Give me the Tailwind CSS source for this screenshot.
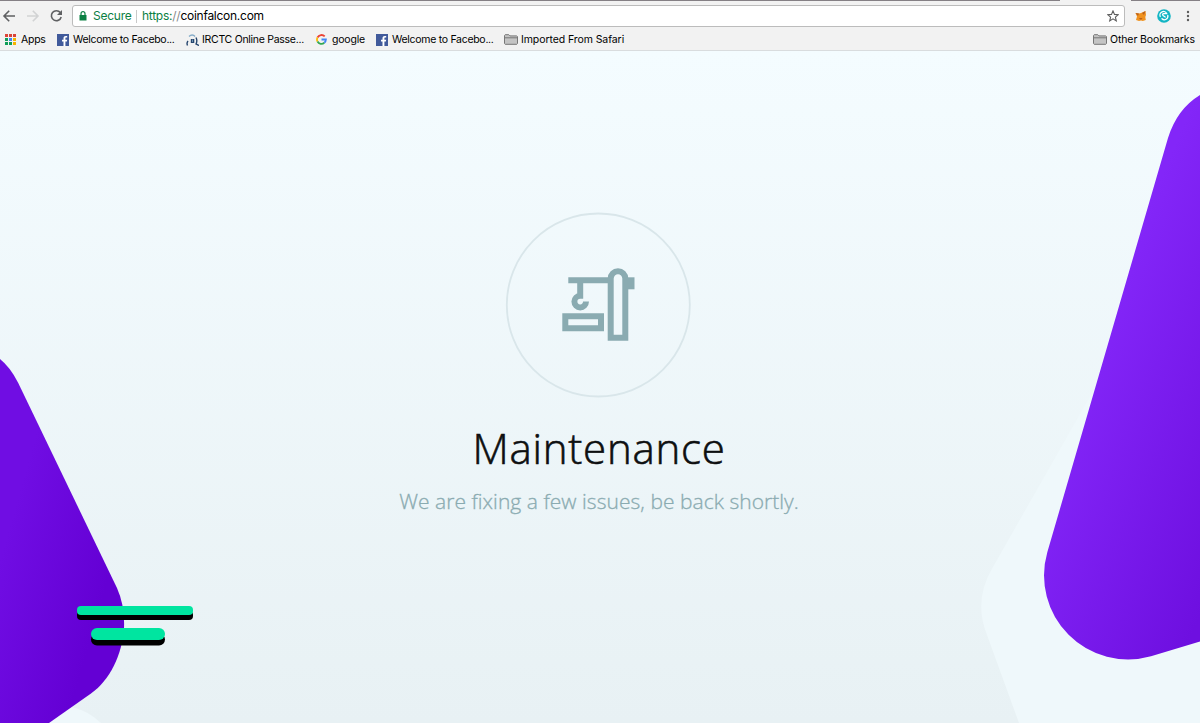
<!DOCTYPE html>
<html lang="en">
<head>
	<meta charset="utf-8">
	<title>CoinFalcon - Maintenance</title>
	<script src="https://cdn.jsdelivr.net/npm/@tailwindcss/browser@4"></script>
</head>
<body class="h-[723px] w-[1200px] overflow-hidden bg-[#f2f2f2] font-['Inter','Liberation_Sans',sans-serif] text-[#1c1c1c]">
	<div class="flex h-full flex-col">
		<!-- Browser toolbar -->
		<header class="h-[51px] shrink-0 border-b border-[#d9dcde]">
			<div class="flex h-px justify-between">
				<div class="w-[1060px] bg-[#858085]"></div>
				<div class="w-[69px] bg-[#858085]"></div>
			</div>
			<div class="flex h-[30px] items-center">
				<svg class="h-[22px] w-[72px] shrink-0" viewBox="0 0 72 22" fill="none" stroke-width="1.6">
					<path stroke="#5f6062" d="M15 11H4.500M9.200 5.700 4 11l5.200 5.300"/>
					<path stroke="#d2d3d4" d="M27 11h10.500M32.800 5.700 38 11l-5.200 5.300"/>
					<path stroke="#5f6062" d="M60.300 7.600A5 5 0 1 0 61.200 12"/>
					<path fill="#5f6062" d="M62 5v5h-5z"/>
				</svg>
				<div class="flex h-[22px] w-[1053px] shrink-0 items-center rounded-[3px] border border-[#bcbcbc] bg-white pl-[6px] pr-[5px] text-[12px]">
					<svg class="mr-[6px] h-[10px] w-2" viewBox="0 0 8 10">
						<path fill="#0b8043" d="M0.500 4h7v5.500h-7z"/>
						<path fill="none" stroke="#0b8043" stroke-width="1.200" d="M2 4.500V2.700a2 2 0 0 1 4 0v1.800"/>
					</svg>
					<span class="w-[38px] whitespace-nowrap tracking-[-0.25px] text-[#0b8043]">Secure</span>
					<span class="ml-[5px] mr-[5px] h-[13px] w-px bg-[#c9c9c9]"></span>
					<span class="whitespace-nowrap tracking-[-0.26px] text-black"><span class="text-[#0b8043]">https:</span><span class="text-[#8a8a8a]">//</span>coinfalcon.com</span>
					<svg class="ml-auto h-3 w-3" viewBox="0 0 12 12" fill="none" stroke="#5c5c5c" stroke-width="1.100">
						<path d="m6 .9 1.500 3.500 3.800.3-2.900 2.500.9 3.700L6 8.900l-3.300 2 .9-3.700L.7 4.700l3.800-.3z"/>
					</svg>
				</div>
				<svg class="ml-[10px] h-[12px] w-[12px]" viewBox="0 0 12 12">
					<path fill="#f0921f" d="m.5 3 3.500.5L6 3l4.500-2 .5 4-.7 2 .5 3-3 1-1.800-.5-2 .5L1 10l1-3.500z"/>
					<path fill="#b9601c" d="m.5 3 3.500.5L3 6zM10.500 1 7 3l2 2zM4 8h3.500l-1 1.500H5z"/>
				</svg>
				<svg class="ml-[10px] h-[14px] w-[14px]" viewBox="0 0 14 14">
					<circle cx="7" cy="7" r="6.800" fill="#13b5c4"/>
					<path fill="none" stroke="#fff" stroke-width="1.300" stroke-linecap="round" stroke-linejoin="round" d="M3.200 7.500A3.500 3.500 0 0 1 9.800 4.700H6.700Q5 5 6 6.500L8.200 8M10.800 6.500A3.500 3.500 0 0 1 5 9.800"/>
				</svg>
				<svg class="ml-[15px] h-3 w-[4px]" viewBox="0 0 4 12" fill="#5c5c5c">
					<circle cx="2" cy="2" r="1.200"/><circle cx="2" cy="6" r="1.200"/><circle cx="2" cy="10" r="1.200"/>
				</svg>
			</div>
			<!-- Bookmarks -->
			<nav class="flex h-[17px] items-center whitespace-nowrap pl-[5px] text-[10.5px] text-black">
				<div class="flex w-[52px] items-center gap-[5px]">
					<svg class="h-[11px] w-[11px] shrink-0" viewBox="0 0 11 11">
						<path fill="#db4437" d="M0 0h3v3H0zM4 0h3v3H4zM8 0h3v3H8z"/>
						<path fill="#0f9d58" d="M0 4h3v3H0z"/><path fill="#4285f4" d="M4 4h3v3H4z"/><path fill="#f4b400" d="M8 4h3v3H8z"/>
						<path fill="#0f9d58" d="M0 8h3v3H0zM4 8h3v3H4z"/><path fill="#f4b400" d="M8 8h3v3H8z"/>
					</svg>
					<span class="tracking-[-0.25px]">Apps</span>
				</div>
				<div class="flex w-[129px] items-center gap-1">
					<svg class="h-3 w-3 shrink-0" viewBox="0 0 12 12">
						<path fill="#415a9b" d="M0 0h12v12H0z"/>
						<path fill="#fff" d="M6.500 12V7.500H5V5.700h1.500V4.300c0-1.600.9-2.400 2.300-2.400h1.400v1.700h-.9c-.7 0-.9.300-.9.900v1.200h1.800l-.3 1.800H8.400V12z"/>
					</svg>
					<span class="tracking-[-0.29px]">Welcome to Facebo...</span>
				</div>
				<div class="flex w-[130px] items-center gap-[3px]">
					<svg class="h-3 w-[13px] shrink-0" viewBox="0 0 13 12" fill="none">
						<path stroke="#84abc8" stroke-width="1.300" d="M3 2.500C5 .5 7.500.5 9 2.500"/>
						<path stroke="#27466e" stroke-width="1.400" d="M2 7C.8 8.500.8 10 1.500 11.500M10 3.500c1.300 2.500 1 4.500 0 6.500l3 1.500"/>
						<path fill="#27466e" d="M4.800 5h3.500v4H4.800z"/><path stroke="#9ec7e0" stroke-width=".6" d="M6.500 5.500v2.500"/>
					</svg>
					<span class="tracking-[-0.28px]">IRCTC Online Passe...</span>
				</div>
				<div class="flex w-[60px] items-center gap-[5px]">
					<svg class="h-[11px] w-[11px] shrink-0" viewBox="0 0 11 11" fill="none" stroke-width="1.800">
						<path stroke="#ea4335" d="M1.500 3.500A4.400 4.400 0 0 1 8.700 2.400"/>
						<path stroke="#fbbc05" d="M1.500 3.500a4.400 4.400 0 0 0 0 4"/>
						<path stroke="#34a853" d="M1.500 7.500a4.400 4.400 0 0 0 6.800 1.300"/>
						<path stroke="#4285f4" d="M8.300 8.800A4.400 4.400 0 0 0 9.900 5.500H5.500"/>
					</svg>
					<span class="tracking-[-0.2px]">google</span>
				</div>
				<div class="flex w-[128px] items-center gap-1">
					<svg class="h-3 w-3 shrink-0" viewBox="0 0 12 12">
						<path fill="#415a9b" d="M0 0h12v12H0z"/>
						<path fill="#fff" d="M6.500 12V7.500H5V5.700h1.500V4.300c0-1.600.9-2.400 2.300-2.400h1.400v1.700h-.9c-.7 0-.9.300-.9.900v1.200h1.800l-.3 1.800H8.400V12z"/>
					</svg>
					<span class="tracking-[-0.29px]">Welcome to Facebo...</span>
				</div>
				<div class="flex items-center gap-[3px]">
					<svg class="h-[11px] w-[14px] shrink-0" viewBox="0 0 14 11" fill="#c4c4c4" stroke="#777">
						<path d="M.5 9.500v-8l.7-.8h3.600l1.200 1.200h6.800l.7.700v6.900l-.7.800H1.200zM.5 3.800h13"/>
					</svg>
					<span class="tracking-[-0.08px]">Imported From Safari</span>
				</div>
				<div class="ml-auto flex w-[107px] items-center gap-[3px]">
					<svg class="h-[11px] w-[14px] shrink-0" viewBox="0 0 14 11" fill="#c4c4c4" stroke="#777">
						<path d="M.5 9.500v-8l.7-.8h3.600l1.200 1.200h6.800l.7.700v6.900l-.7.800H1.200zM.5 3.800h13"/>
					</svg>
					<span class="tracking-[-0.1px]">Other Bookmarks</span>
				</div>
			</nav>
		</header>

		<!-- Maintenance page -->
		<main class="relative flex grow flex-col items-center bg-linear-to-b from-[#f4fcff] to-[#e8f1f4] pr-[4px] pt-[161px]">
			<svg class="absolute left-0 top-0 h-[672px] w-[1200px]" viewBox="0 51 1200 672">
				<defs>
					<linearGradient id="right" gradientUnits="userSpaceOnUse" x1="1080" y1="370" x2="1270" y2="450">
						<stop offset="0" stop-color="#8326f8"/>
						<stop offset="1" stop-color="#6e0fe0"/>
					</linearGradient>
					<linearGradient id="left" gradientUnits="userSpaceOnUse" x1="0" y1="560" x2="105" y2="590">
						<stop offset="0" stop-color="#700de3"/>
						<stop offset="1" stop-color="#6400d4"/>
					</linearGradient>
				</defs>
				<path fill="#eff8fb" d="M1100 379 993 567Q973 600 987 635L1019 723H1200V379z"/>
				<path fill="#eff8fb" d="M60 706Q83 706 101 723H40z"/>
				<path fill="url(#right)" d="M1200 95Q1177 109 1168 138L1047.300 552.300A84 84 0 0 0 1151 656.200L1200 641.500z"/>
				<path fill="url(#left)" d="M0 359Q10 367 18 382.500L117 588Q125 606 124 628C122 655 110 680 91 693.500L49 723H0z"/>
			</svg>
			<div class="absolute left-[77px] top-[555px] h-[9px] w-[116px] rounded-[4px] bg-[#00e5a0] shadow-[0_5px_0_#000]"></div>
			<div class="absolute left-[91px] top-[577px] h-[12px] w-[74px] rounded-[6px] bg-[#00e5a0] shadow-[0_5.500px_0_#000]"></div>

			<svg class="relative h-[186px] w-[186px]" viewBox="505 211.700 186 186" fill="none">
				<circle cx="598.300" cy="304.700" r="91.500" stroke="#d9e6ea" stroke-width="1.800"/>
				<g stroke="#8aabb1" stroke-width="6">
					<path d="M568.300 280H610M580.200 280V295.500A5.800 5.800 0 1 0 586 301.300"/>
					<path d="M565.300 316H601V328H565.300z"/>
					<path d="M610.700 278.300a7.300 7.300 0 0 1 14.600 0V337.500H610.700z"/>
					<path d="M628 283h6.500" stroke-width="12"/>
				</g>
			</svg>
			<h1 class="relative mt-[18px] whitespace-nowrap pl-[2px] font-['Open_Sans',sans-serif] text-[42px] font-light leading-[64px] tracking-[0.75px] text-[#0d0f10] [-webkit-text-stroke:0.6px_#0d0f10]">Maintenance</h1>
			<p class="relative mt-[5px] whitespace-nowrap pl-[2px] font-['Open_Sans',sans-serif] text-[21px] font-light leading-[32px] tracking-[0.04px] text-[#8aabb1] [-webkit-text-stroke:0.3px_#8aabb1]">We are fixing a few issues, be back shortly.</p>
		</main>
	</div>
</body>
</html>
